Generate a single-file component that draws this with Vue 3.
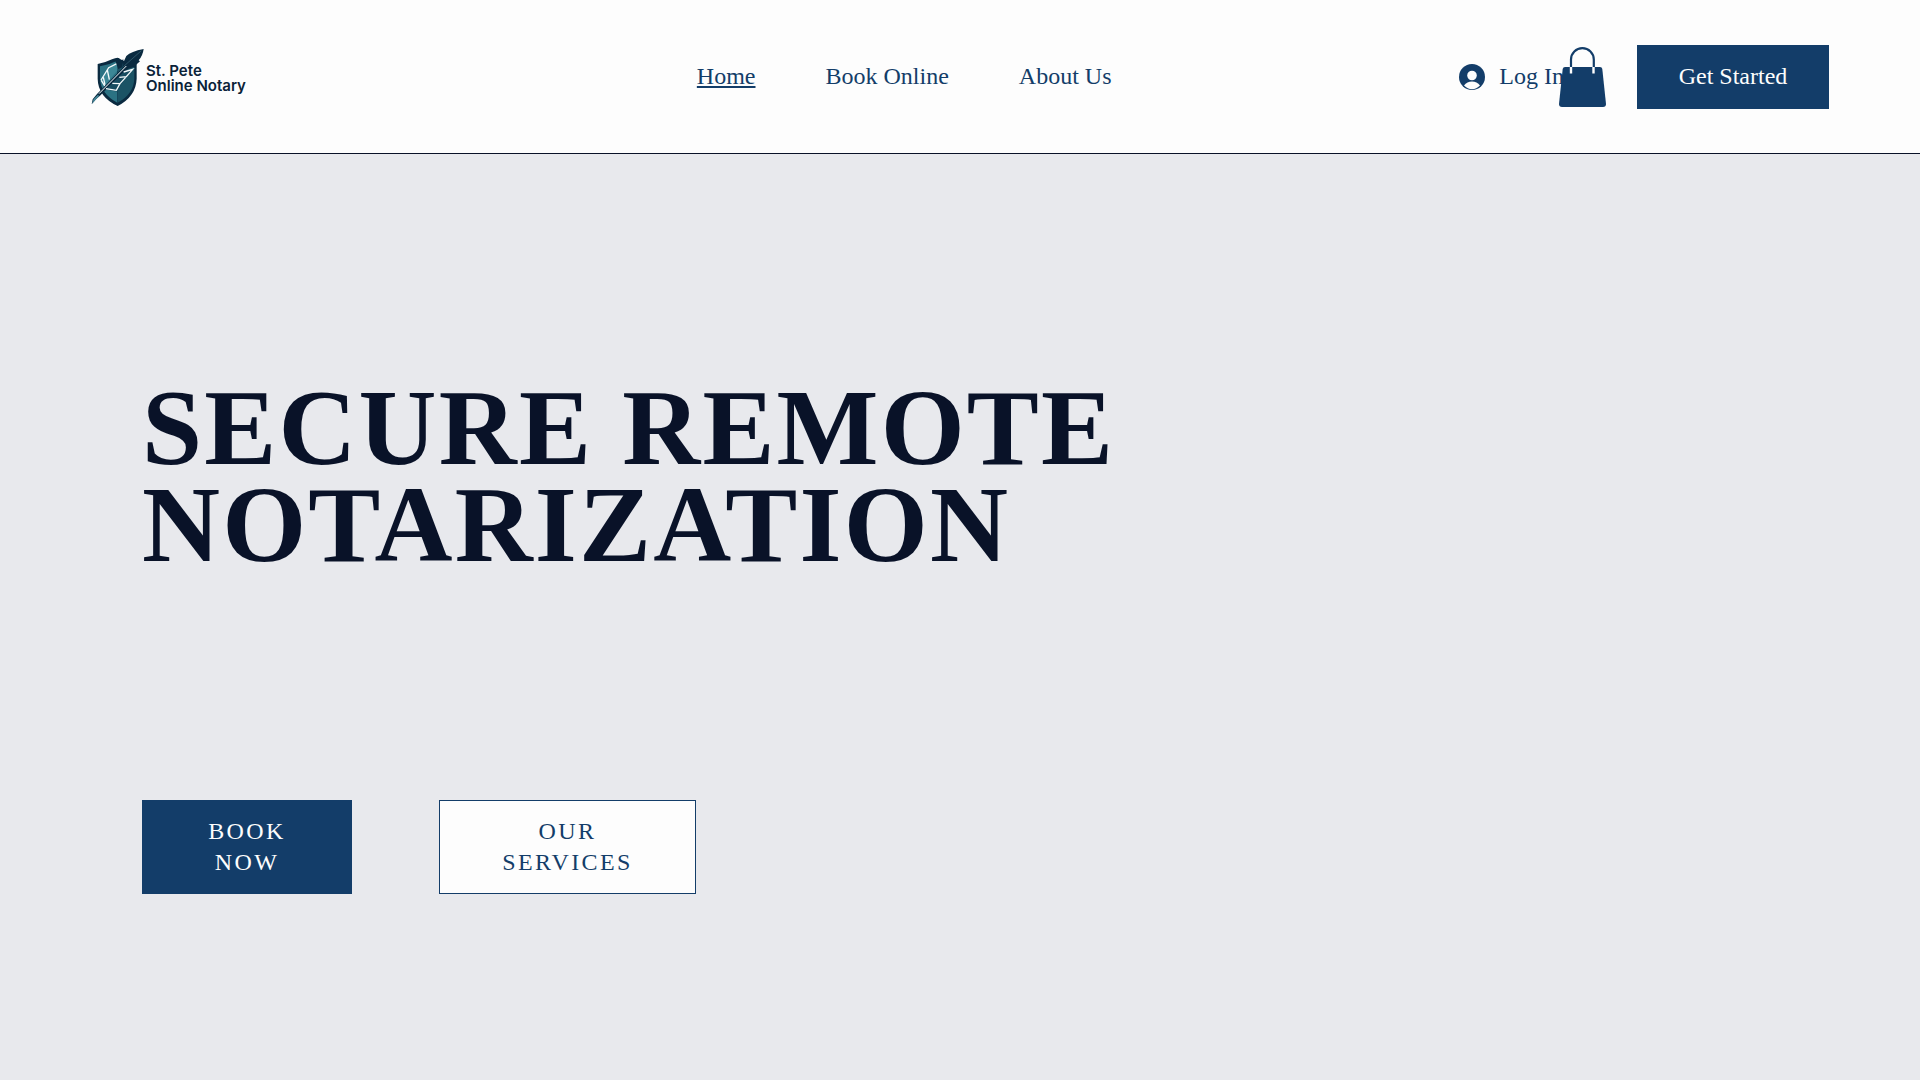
<script setup>
const links = [
  { label: 'Home', href: '#home', current: true },
  { label: 'Book Online', href: '#book-online', current: false },
  { label: 'About Us', href: '#about-us', current: false },
]
</script>

<template>
  <div class="page">
    <header class="header">
      <a class="logo" href="#home">
        <svg class="logo-mark" viewBox="33 24 159 177" aria-hidden="true">
          <path d="M53 72 Q76 68 96 58 Q106 54 113 53 Q142 70 170 72 V116 Q168 169 113 198 Q54 170 53 116Z" fill="#0a2a40" />
          <path d="M60 79 Q86 75 112 62 V188 Q62 161 60 116Z" fill="#2b7283" />
          <path d="M113 62 Q138 77 163 80 V116 Q161 162 113 188Z" fill="#1b5365" />
          <path d="M63 122 L86 82 L112 69 L112 92 L74 136Z" fill="#3c8796" />
          <path d="M63 120 L86 83 L112 70 M70 112 L75 134 M82 90 L88 119 M64 121 L74 138" fill="none" stroke="#f4fafb" stroke-width="4" />
          <path d="M104 58 L117 54 L122 67 L130 56 L127 82 L115 87Z" fill="#0a2a40" />
          <path d="M191 27 Q188 48 176 61 L180 64 L161 81 L143 87 L126 102 L60 167 L48 178 L35 193 L38 178 L51 162 L128 83 L131 65 L139 48 Q153 34 191 27Z" fill="#0a2a40" />
          <path d="M132 95 L159 87 L134 116 L112 155 L76 148 L98 129Z" fill="#174c60" />
          <path d="M131 96 L158 88 L139 110 L118 112 M139 110 L120 131 L97 130 M120 131 L109 151 L78 146" fill="none" stroke="#f4fafb" stroke-width="4" />
          <path d="M184 32 L130 80" fill="none" stroke="#40697a" stroke-width="2" />
          <path d="M139 78 L57 161" fill="none" stroke="#f4fafb" stroke-width="3" />
          <path d="M36 191 L41 177 L54 164 L57 168Z" fill="#46899a" />
        </svg>
        <span class="logo-name">St. Pete<br />Online Notary</span>
      </a>

      <nav class="nav" aria-label="Main">
        <a
          v-for="link in links"
          :key="link.label"
          :href="link.href"
          :class="{ current: link.current }"
          :aria-current="link.current ? 'page' : null"
        >{{ link.label }}</a>
      </nav>

      <div class="actions">
        <button class="login" type="button">
          <svg class="avatar" viewBox="0 0 26 26" aria-hidden="true">
            <circle cx="13" cy="13" r="13" fill="#133d69" />
            <circle cx="13" cy="11.5" r="4.8" fill="#fdfdfd" />
            <path d="M5 21.5 Q8 17.5 13 17.5 Q18 17.5 21 21.5 Q17.5 25.2 13 25.2 Q8.5 25.2 5 21.5Z" fill="#fdfdfd" />
          </svg>
          <span class="login-label">Log In</span>
        </button>
        <a class="bag" href="#cart" aria-label="Cart">
          <svg viewBox="0 0 47 60" aria-hidden="true">
            <path d="M6 20 H41 Q43 20 43.3 22 L47 57 Q47 60 44 60 H3 Q0 60 0 57 L3.7 22 Q4 20 6 20Z" fill="#133d69" />
            <path d="M12 20 V26.5 M34.5 20 V26.5" stroke="#fdfdfd" stroke-width="2.4" />
            <path d="M12 20 V12.500 A11.400 11.400 0 0 1 34.800 12.500 V20" fill="none" stroke="#133d69" stroke-width="2.2" />
          </svg>
        </a>
        <button class="start" type="button">Get Started</button>
      </div>
    </header>

    <main class="hero">
      <h1>SECURE REMOTE<br />NOTARIZATION</h1>
      <div class="cta">
        <button class="cta-button book" type="button">BOOK<br />NOW</button>
        <button class="cta-button services" type="button">OUR<br />SERVICES</button>
      </div>
    </main>
  </div>
</template>

<style>
body {
  margin: 0;
  background: #e8e9ed;
}
</style>

<style scoped>
.page {
  font-family: "Liberation Serif", "Times New Roman", serif;
  font-size: 24px;
  color: #133d69;
}

.header {
  display: flex;
  justify-content: space-between;
  align-items: center;
  padding: 45px 91px 44px;
  background: #fdfdfd;
  border-bottom: 1px solid #091228;
}

.logo {
  display: flex;
  align-items: center;
  gap: 2px;
  width: 258px;
  color: #0a2238;
  text-decoration: none;
}

.logo-mark {
  width: 53px;
  height: 59px;
}

.logo-name {
  padding-top: 2px;
  font-family: Inter, sans-serif;
  font-size: 15px;
  font-weight: 600;
  line-height: 15px;
  white-space: nowrap;
}

.nav {
  display: flex;
  gap: 70px;
}

.nav,
.login-label,
.start {
  line-height: 28px;
  padding: 0 0 2px;
}

.nav a {
  color: inherit;
  text-decoration: none;
  white-space: nowrap;
}

.nav a.current {
  text-decoration: underline;
}

.actions {
  display: flex;
  align-items: center;
}

button {
  font: inherit;
  color: inherit;
  border: 0;
  border-radius: 0;
  cursor: pointer;
}

.login {
  display: flex;
  align-items: center;
  gap: 14px;
  padding: 0;
  background: none;
  white-space: nowrap;
}

.avatar {
  width: 26px;
  height: 26px;
}

.bag {
  width: 47px;
  margin-left: -5px;
  margin-right: 31px;
}

.bag svg {
  display: block;
  width: 47px;
  height: 60px;
}

.start {
  width: 192px;
  height: 64px;
  background: #133d69;
  color: #fdfdfd;
}

.hero {
  padding: 225px 142px 80px;
}

h1 {
  margin: 0;
  font-size: 108px;
  line-height: 97px;
  font-weight: 700;
  letter-spacing: 0.02em;
  color: #091228;
}

.cta {
  display: flex;
  gap: 87px;
  margin-top: 227px;
}

.cta-button {
  padding: 15px 60px;
  border: 1px solid #133d69;
  line-height: 31px;
  letter-spacing: 0.1em;
}

.book {
  width: 210px;
  background: #133d69;
  color: #fdfdfd;
}

.services {
  width: 257px;
  background: #fdfdfd;
}
</style>
